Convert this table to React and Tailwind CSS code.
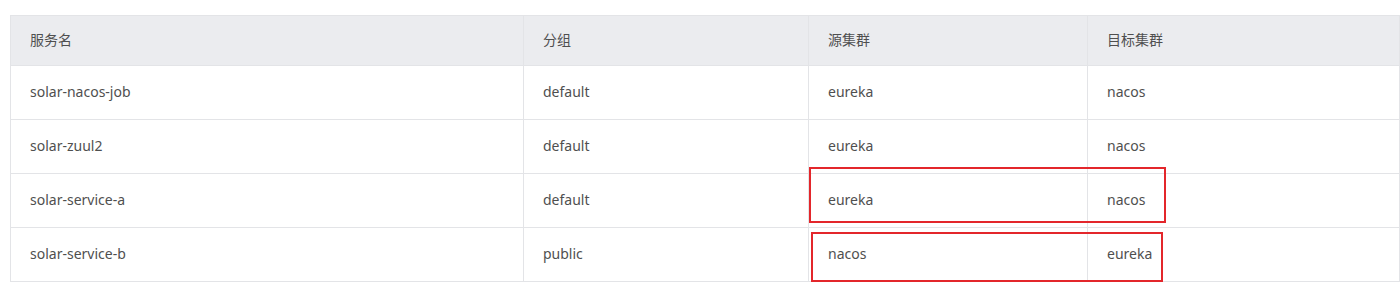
import React from "react";

const rows = [
  { name: "solar-nacos-job", group: "default", from: "eureka", to: "nacos" },
  { name: "solar-zuul2", group: "default", from: "eureka", to: "nacos" },
  { name: "solar-service-a", group: "default", from: "eureka", to: "nacos" },
  { name: "solar-service-b", group: "public", from: "nacos", to: "eureka" },
];

function App() {
  return (
    <div
      className="relative w-[1400px] h-[285px] overflow-hidden bg-white pl-[10px] pt-[15px] text-[14px] text-[#4f4f4f]"
      style={{ fontFamily: '"Noto Sans", "Noto Sans CJK SC", sans-serif' }}
    >
      <table className="w-[1389px] border-collapse table-fixed">
        <colgroup>
          <col className="w-[513px]" />
          <col className="w-[285px]" />
          <col className="w-[279px]" />
          <col className="w-[312px]" />
        </colgroup>
        <thead>
          <tr className="bg-[#ebecef] h-[50px]">
            {["服务名", "分组", "源集群", "目标集群"].map((h) => (
              <th
                key={h}
                className="border border-[#e3e4e7] px-[19px] pb-[2px] text-left font-normal text-[#4f4f4f]"
              >
                {h}
              </th>
            ))}
          </tr>
        </thead>
        <tbody>
          {rows.map((r) => (
            <tr key={r.name} className="h-[54px]">
              <td className="border border-[#e3e4e7] px-[19px] pb-[2px]">{r.name}</td>
              <td className="border border-[#e3e4e7] px-[19px] pb-[2px]">{r.group}</td>
              <td className="border border-[#e3e4e7] px-[19px] pb-[2px]">{r.from}</td>
              <td className="border border-[#e3e4e7] px-[19px] pb-[2px]">{r.to}</td>
            </tr>
          ))}
        </tbody>
      </table>

      {/* annotation boxes */}
      <div className="absolute left-[809px] top-[167px] w-[357px] h-[56px] border-2 border-[#e3262b]" />
      <div className="absolute left-[811px] top-[232px] w-[352px] h-[50px] border-2 border-[#e3262b]" />
    </div>
  );
}

export default App;
